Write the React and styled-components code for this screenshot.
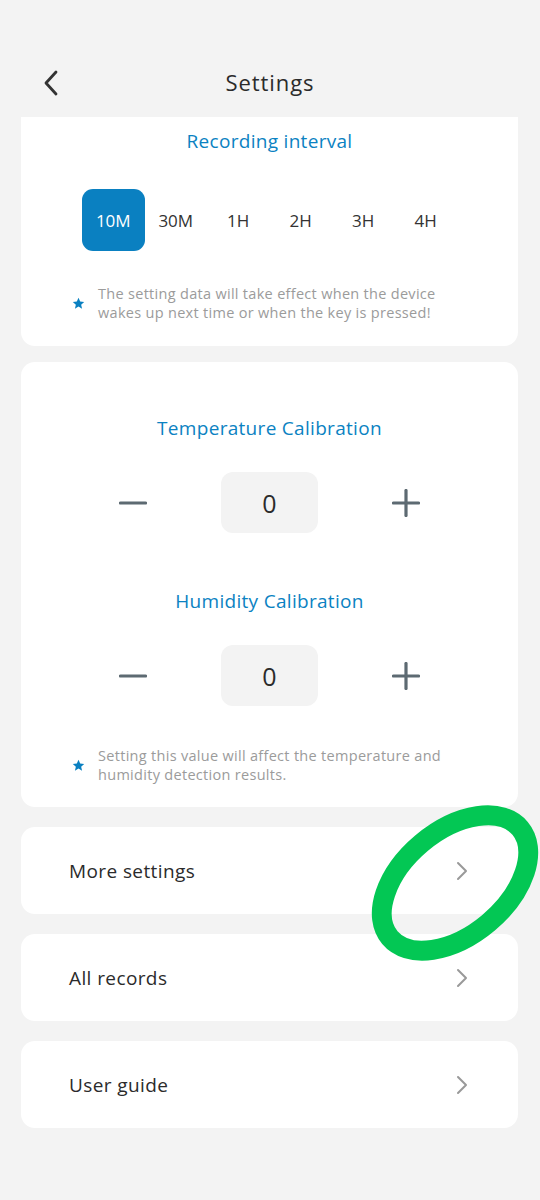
import React from 'react';
import styled, { createGlobalStyle } from 'styled-components';

const GlobalStyle = createGlobalStyle`
  html, body {
    margin: 0;
    padding: 0;
    background: #f3f3f3;
  }
  body {
    font-family: "Open Sans", "Noto Sans", sans-serif;
    color: #333;
  }
`;

const Page = styled.div`
  position: relative;
  width: 540px;
  min-height: 1200px;
  background: #f3f3f3;
  overflow: hidden;
`;

const Header = styled.div`
  height: 67px;
  margin-top: 50px;
  display: flex;
  align-items: center;
  justify-content: center;
  position: relative;
`;

const BackButton = styled.div`
  position: absolute;
  left: 39px;
  top: 19px;
  width: 24px;
  height: 30px;
  display: flex;
  align-items: center;
  justify-content: center;
`;

const Title = styled.div`
  font-size: 22px;
  line-height: 28px;
  margin-top: -4px;
  color: #2b2b2b;
  letter-spacing: 0.9px;
`;

const Content = styled.div`
  display: flex;
  flex-direction: column;
  padding: 0 22px 0 21px;
`;

const Card = styled.div`
  background: #fff;
  border-radius: ${p => (p.$flatTop ? '0 0 14px 14px' : '14px')};
  padding: ${p => p.$pad || '0'};
  margin-bottom: ${p => p.$gap || '20px'};
  display: flex;
  flex-direction: column;
  align-items: center;
`;

const SectionTitle = styled.div`
  font-size: 19px;
  line-height: 24px;
  color: #0b82c2;
  text-align: center;
  letter-spacing: 0.3px;
  margin-top: ${p => p.$top || '0'};
`;

const Intervals = styled.div`
  display: flex;
  margin-top: 36px;
`;

const Interval = styled.div`
  width: 62.5px;
  height: 62px;
  border-radius: 11px;
  display: flex;
  align-items: center;
  justify-content: center;
  font-size: 17px;
  color: ${p => (p.$active ? '#fff' : '#333')};
  background: ${p => (p.$active ? '#0a80c1' : 'transparent')};
`;

const Note = styled.div`
  align-self: stretch;
  display: flex;
  align-items: center;
  gap: 13px;
  padding-left: 51px;
  margin-top: ${p => p.$top || '33px'};
`;

const NoteText = styled.div`
  font-size: 14.5px;
  line-height: 19px;
  letter-spacing: 0.3px;
  color: #9b9b9b;
`;

const Stepper = styled.div`
  display: flex;
  align-items: center;
  margin-top: 32px;
`;

const StepButton = styled.div`
  width: 60px;
  height: 60px;
  display: flex;
  align-items: center;
  justify-content: center;
  margin: 0 58px;
`;

const ValueBox = styled.div`
  width: 97px;
  height: 61px;
  border-radius: 12px;
  background: #f3f3f3;
  display: flex;
  align-items: center;
  justify-content: center;
  font-size: 25px;
  color: #2b2b2b;
`;

const LinkRow = styled.div`
  align-self: stretch;
  height: 87px;
  display: flex;
  align-items: center;
  justify-content: space-between;
  padding: 0 50px 0 48px;
  font-size: 19px;
  letter-spacing: 0.4px;
  color: #2b2b2b;
`;

const Mark = styled.svg`
  position: absolute;
  left: 360px;
  top: 797px;
  pointer-events: none;
`;

const Star = () => (
  <svg width="13" height="13" viewBox="0 0 24 24">
    <path
      d="M12 1.5l3.1 6.9 7.4.7-5.6 5 1.7 7.4L12 17.6l-6.6 3.9 1.7-7.4-5.6-5 7.4-.7z"
      fill="#0a80c1"
    />
  </svg>
);

const Minus = () => (
  <svg width="28" height="28" viewBox="0 0 28 28">
    <line x1="1.5" y1="14" x2="26.5" y2="14" stroke="#5d6a72" strokeWidth="3.2" strokeLinecap="round" />
  </svg>
);

const Plus = () => (
  <svg width="28" height="28" viewBox="0 0 28 28">
    <line x1="1.5" y1="14" x2="26.5" y2="14" stroke="#5d6a72" strokeWidth="3.2" strokeLinecap="round" />
    <line x1="14" y1="1.5" x2="14" y2="26.5" stroke="#5d6a72" strokeWidth="3.2" strokeLinecap="round" />
  </svg>
);

const Chevron = () => (
  <svg width="12" height="20" viewBox="0 0 12 20">
    <polyline points="2,2 10,10 2,18" fill="none" stroke="#999" strokeWidth="2" strokeLinecap="round" strokeLinejoin="round" />
  </svg>
);

const intervals = ['10M', '30M', '1H', '2H', '3H', '4H'];

const Calibration = ({ title, top }) => (
  <>
    <SectionTitle $top={top}>{title}</SectionTitle>
    <Stepper>
      <StepButton><Minus /></StepButton>
      <ValueBox>0</ValueBox>
      <StepButton><Plus /></StepButton>
    </Stepper>
  </>
);

export default function App() {
  return (
    <Page>
      <GlobalStyle />
      <Header>
        <BackButton>
          <svg width="18" height="28" viewBox="0 0 18 28">
            <polyline points="14,2 4,13 14,24" fill="none" stroke="#333" strokeWidth="2.8" strokeLinecap="round" strokeLinejoin="round" />
          </svg>
        </BackButton>
        <Title>Settings</Title>
      </Header>
      <Content>
        <Card $flatTop $pad="12px 0 24px" $gap="16px">
          <SectionTitle>Recording interval</SectionTitle>
          <Intervals>
            {intervals.map((v, i) => (
              <Interval key={v} $active={i === 0}>{v}</Interval>
            ))}
          </Intervals>
          <Note>
            <Star />
            <NoteText>
              The setting data will take effect when the device<br />
              wakes up next time or when the key is pressed!
            </NoteText>
          </Note>
        </Card>
        <Card $pad="54px 0 23px">
          <Calibration title="Temperature Calibration" />
          <Calibration title="Humidity Calibration" top="56px" />
          <Note $top="40px">
            <Star />
            <NoteText>
              Setting this value will affect the temperature and<br />
              humidity detection results.
            </NoteText>
          </Note>
        </Card>
        <Card>
          <LinkRow>More settings<Chevron /></LinkRow>
        </Card>
        <Card>
          <LinkRow>All records<Chevron /></LinkRow>
        </Card>
        <Card>
          <LinkRow>User guide<Chevron /></LinkRow>
        </Card>
      </Content>
      <Mark width="200" height="180" viewBox="0 0 200 180">
        <ellipse cx="95" cy="86" rx="85" ry="52" fill="none" stroke="#03c754" strokeWidth="20" transform="rotate(-40 95 86)" />
      </Mark>
    </Page>
  );
}
